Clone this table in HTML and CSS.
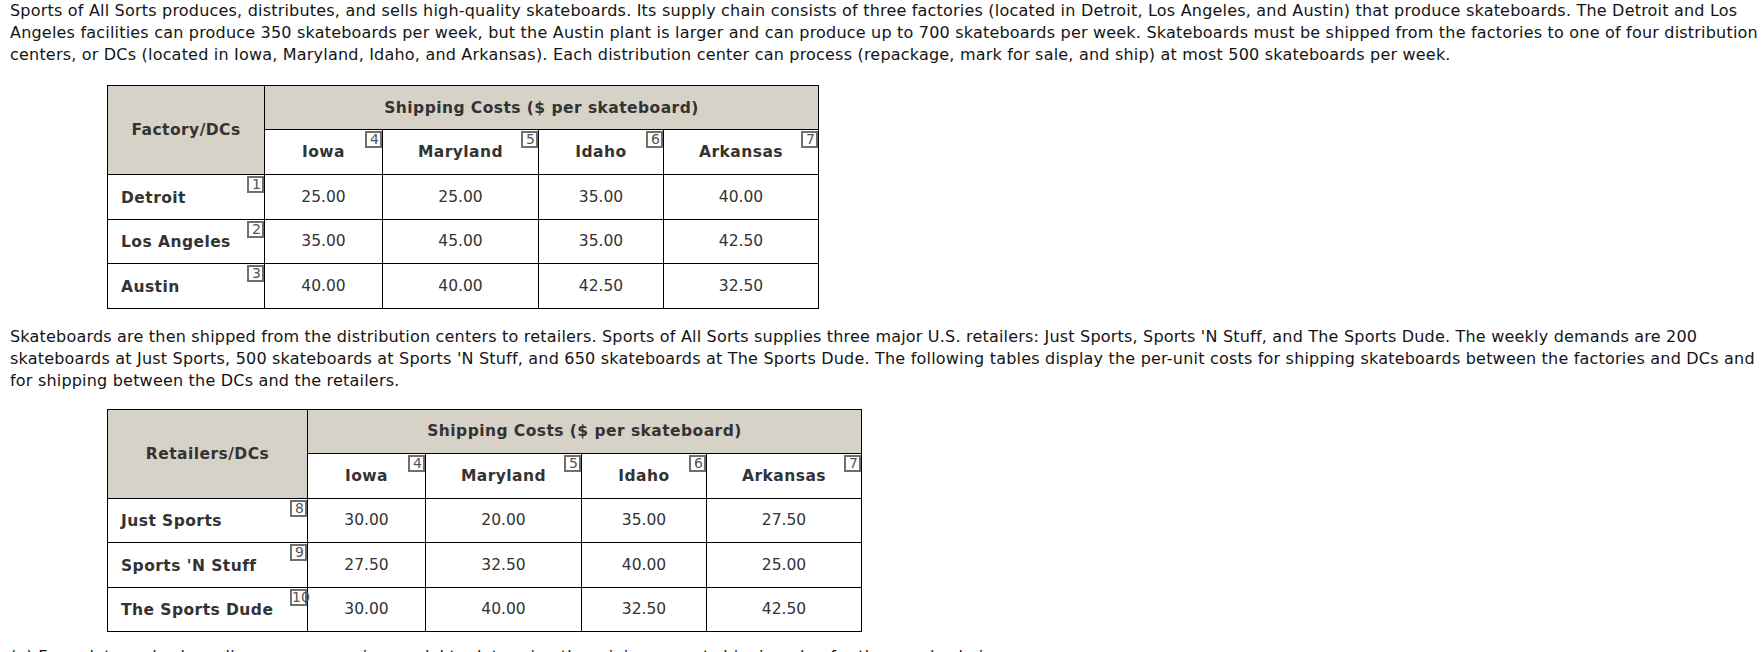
FILE: index.html
```html
<!DOCTYPE html>
<html>
<head>
<meta charset="utf-8">
<link rel="stylesheet" href="styles.css">
</head>
<body>
<div class="page">
<p class="text">Sports of All Sorts produces, distributes, and sells high-quality skateboards. Its supply chain consists of three factories (located in Detroit, Los Angeles, and Austin) that produce skateboards. The Detroit and Los Angeles facilities can produce 350 skateboards per week, but the Austin plant is larger and can produce up to 700 skateboards per week. Skateboards must be shipped from the factories to one of four distribution centers, or DCs (located in Iowa, Maryland, Idaho, and Arkansas). Each distribution center can process (repackage, mark for sale, and ship) at most 500 skateboards per week.</p>

<table class="grid grid-one">
<colgroup><col class="c-label1"><col class="c-iowa"><col class="c-md"><col class="c-id"><col class="c-ar"></colgroup>
<thead>
<tr class="r-top"><th rowspan="2" class="corner">Factory/DCs</th><th colspan="4" class="span">Shipping Costs ($ per skateboard)</th></tr>
<tr class="r-sub"><th class="sub">Iowa<span class="tag">4</span></th><th class="sub">Maryland<span class="tag">5</span></th><th class="sub">Idaho<span class="tag">6</span></th><th class="sub">Arkansas<span class="tag">7</span></th></tr>
</thead>
<tbody>
<tr><th class="row">Detroit<span class="tag">1</span></th><td>25.00</td><td>25.00</td><td>35.00</td><td>40.00</td></tr>
<tr><th class="row">Los Angeles<span class="tag">2</span></th><td>35.00</td><td>45.00</td><td>35.00</td><td>42.50</td></tr>
<tr><th class="row">Austin<span class="tag">3</span></th><td>40.00</td><td>40.00</td><td>42.50</td><td>32.50</td></tr>
</tbody>
</table>

<p class="text">Skateboards are then shipped from the distribution centers to retailers. Sports of All Sorts supplies three major U.S. retailers: Just Sports, Sports 'N Stuff, and The Sports Dude. The weekly demands are 200 skateboards at Just Sports, 500 skateboards at Sports 'N Stuff, and 650 skateboards at The Sports Dude. The following tables display the per-unit costs for shipping skateboards between the factories and DCs and for shipping between the DCs and the retailers.</p>

<table class="grid grid-two">
<colgroup><col class="c-label2"><col class="c-iowa"><col class="c-md"><col class="c-id"><col class="c-ar"></colgroup>
<thead>
<tr class="r-top"><th rowspan="2" class="corner">Retailers/DCs</th><th colspan="4" class="span">Shipping Costs ($ per skateboard)</th></tr>
<tr class="r-sub"><th class="sub">Iowa<span class="tag">4</span></th><th class="sub">Maryland<span class="tag">5</span></th><th class="sub">Idaho<span class="tag">6</span></th><th class="sub">Arkansas<span class="tag">7</span></th></tr>
</thead>
<tbody>
<tr><th class="row">Just Sports<span class="tag">8</span></th><td>30.00</td><td>20.00</td><td>35.00</td><td>27.50</td></tr>
<tr><th class="row">Sports 'N Stuff<span class="tag">9</span></th><td>27.50</td><td>32.50</td><td>40.00</td><td>25.00</td></tr>
<tr><th class="row">The Sports Dude<span class="tag">10</span></th><td>30.00</td><td>40.00</td><td>32.50</td><td>42.50</td></tr>
</tbody>
</table>

<p class="text">(a) Formulate and solve a linear programming model to determine the minimum cost shipping plan for the supply chain.</p>
</div>
</body>
</html>
```

FILE: styles.css
```css
html, body {
  margin: 0;
  padding: 0;
  background: #ffffff;
}
.page {
  padding: 0 4px 0 10px;
  font-family: "DejaVu Sans", Verdana, sans-serif;
  font-size: 16px;
  color: #141414;
}
.text {
  margin: 0;
  line-height: 22px;
  letter-spacing: 0.2px;
}
.grid {
  border-collapse: collapse;
  table-layout: fixed;
  margin: 19px 0 17px 97px;
  color: #333333;
  font-size: 15.5px;
}
.grid-two {
  margin-top: 17px;
  margin-bottom: 14px;
}
.grid-one { width: 712px; }
.grid-two { width: 754px; }
.c-label1 { width: 157px; }
.c-label2 { width: 200px; }
.c-iowa { width: 118px; }
.c-md { width: 156px; }
.c-id { width: 125px; }
.c-ar { width: 155px; }
.grid th, .grid td {
  border: 1px solid #000;
  padding: 0;
  text-align: center;
  vertical-align: middle;
}
.grid th {
  font-weight: bold;
  letter-spacing: 0.45px;
  position: relative;
}
.r-top th { height: 43px; }
.r-sub th { height: 44px; }
.grid tbody tr { height: 44.5px; }
.corner, .span {
  background: #d6d2c7;
}
.sub { padding-top: 4px; }
.grid td { font-weight: normal; }
.grid th.row {
  text-align: left;
  padding-left: 13px;
  padding-top: 2px;
}
.tag {
  position: absolute;
  top: 1px;
  right: 0;
  width: 12px;
  height: 13px;
  border: 2px solid #6f6f6f;
  background: #fff;
  color: #555;
  font-weight: normal;
  letter-spacing: 0;
  font-size: 14px;
  line-height: 13px;
  text-align: right;
  padding-right: 1px;
  white-space: nowrap;
  overflow: visible;
}
```
